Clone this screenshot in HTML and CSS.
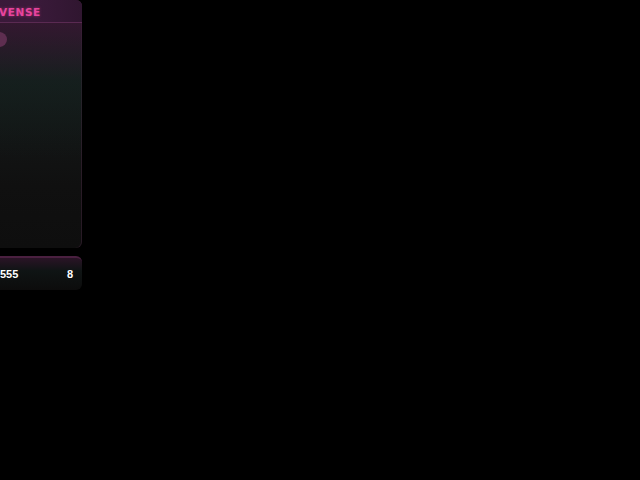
FILE: index.html
```html
<!DOCTYPE html>
<html>
<head>
<meta charset="utf-8">
<link rel="stylesheet" href="styles.css">
</head>
<body>
<div class="stage">
  <section class="panel">
    <header class="panel-head"><span class="title">VENSE</span></header>
    <div class="panel-body">
      <div class="dot"></div>
    </div>
  </section>
  <section class="stat">
    <span class="amount">555</span>
    <span class="count">8</span>
  </section>
</div>
</body>
</html>
```
FILE: styles.css
```css
html, body {
  margin: 0;
  padding: 0;
  background: #000;
  width: 640px;
  height: 480px;
  overflow: hidden;
  font-family: "DejaVu Sans", "Liberation Sans", sans-serif;
}
.stage {
  display: flex;
  flex-direction: column;
  gap: 8px;
  width: 160px;
  margin-left: -78px;
}
.panel {
  height: 248px;
  border-radius: 6px;
  background: linear-gradient(180deg, #2c1528 0%, #151a1a 35%, #101010 75%, #0e0e0e 100%);
  box-shadow: inset -1px 0 0 rgba(90, 50, 80, 0.35);
  display: flex;
  flex-direction: column;
  overflow: hidden;
}
.panel-head {
  height: 23px;
  box-sizing: border-box;
  background: linear-gradient(90deg, #3a1838 0%, #3a1a3a 70%, #301630 100%);
  border-bottom: 1px solid #5a2a52;
  display: flex;
  align-items: center;
  padding: 1px 0 0 77px;
}
.title {
  color: #e8449e;
  font-size: 10.5px;
  font-weight: bold;
  letter-spacing: 0.6px;
  text-shadow: 0 0 3px rgba(232, 68, 158, 0.6);
}
.panel-body {
  flex: 1;
  padding: 9px 0 0 70px;
  background: linear-gradient(180deg, rgba(60, 25, 55, 0.6) 0%, rgba(20, 40, 35, 0.35) 25%, rgba(16, 16, 16, 0) 60%);
}
.dot {
  width: 15px;
  height: 15px;
  border-radius: 50%;
  background: #5e2e50;
}
.stat {
  height: 34px;
  border-radius: 6px;
  box-sizing: border-box;
  border-top: 2px solid #4a2040;
  background: linear-gradient(180deg, #2a1426 0%, #0f1414 40%, #0c0c0c 100%);
  display: flex;
  align-items: center;
  justify-content: space-between;
  padding: 0 9px 0 78px;
  color: #fff;
  font-family: "Liberation Sans", "DejaVu Sans", sans-serif;
  font-size: 11px;
  font-weight: bold;
}
```
